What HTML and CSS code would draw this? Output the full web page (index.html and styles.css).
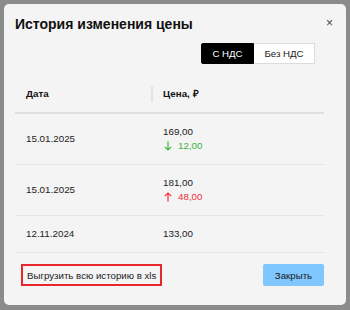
FILE: index.html
```html
<!DOCTYPE html>
<html lang="ru">
<head>
<meta charset="utf-8">
<link rel="stylesheet" href="styles.css">
</head>
<body>
<div class="overlay">
  <div class="modal">
    <div class="modal-head">
      <h1 class="title">История изменения цены</h1>
      <span class="close-x">×</span>
    </div>
    <div class="toggle-row">
      <div class="toggle">
        <span class="seg seg-active">С НДС</span>
        <span class="seg">Без НДС</span>
      </div>
    </div>
    <div class="table">
      <div class="row head">
        <div class="cell c1">Дата</div>
        <div class="cell c2">Цена, ₽</div>
      </div>
      <div class="row">
        <div class="cell c1">15.01.2025</div>
        <div class="cell c2">
          <div>169,00</div>
          <div class="delta down"><svg class="arr" width="8" height="10" viewBox="0 0 8 10"><path d="M4 0.5V9M0.8 5.8L4 9L7.2 5.8" fill="none" stroke="currentColor" stroke-width="1.2"/></svg>12,00</div>
        </div>
      </div>
      <div class="row">
        <div class="cell c1">15.01.2025</div>
        <div class="cell c2">
          <div>181,00</div>
          <div class="delta up"><svg class="arr" width="8" height="10" viewBox="0 0 8 10"><path d="M4 9.5V1M0.8 4.2L4 1L7.2 4.2" fill="none" stroke="currentColor" stroke-width="1.2"/></svg>48,00</div>
        </div>
      </div>
      <div class="row">
        <div class="cell c1">12.11.2024</div>
        <div class="cell c2">133,00</div>
      </div>
    </div>
    <div class="footer">
      <span class="export">Выгрузить всю историю в xls</span>
      <span class="btn-close">Закрыть</span>
    </div>
  </div>
</div>
</body>
</html>
```
FILE: styles.css
```css
html, body {
  margin: 0;
  padding: 0;
}
body {
  width: 350px;
  height: 310px;
  background: #8b8b8b;
  font-family: "Liberation Sans", Arial, sans-serif;
  color: #222;
  overflow: hidden;
}
.overlay {
  padding: 4px;
}
.modal {
  box-sizing: border-box;
  width: 342px;
  height: 301px;
  background: #f4f4f4;
  border-radius: 5px;
  padding: 11px 22px 0 11px;
}
.modal-head {
  display: flex;
  justify-content: space-between;
  align-items: center;
  height: 18px;
}
.title {
  margin: 0;
  font-size: 14px;
  font-weight: bold;
  line-height: 18px;
  color: #111;
}
.close-x {
  font-size: 12px;
  color: #444;
  line-height: 12px;
  margin-right: -9px;
  margin-top: -3px;
}
.toggle-row {
  display: flex;
  justify-content: flex-end;
  margin-top: 10px;
  padding-right: 9px;
}
.toggle {
  display: flex;
  height: 21px;
}
.seg {
  box-sizing: border-box;
  display: flex;
  align-items: center;
  justify-content: center;
  font-size: 9.7px;
  width: 61px;
  background: #fff;
  border: 1px solid #dcdcdc;
  border-left: none;
  color: #222;
}
.seg-active {
  width: 53px;
  background: #000;
  color: #fff;
  border: 1px solid #000;
  border-radius: 2px 0 0 2px;
}
.table {
  margin-top: 12px;
}
.row {
  display: flex;
  border-bottom: 1px solid #e4e4e4;
  font-size: 9.8px;
  line-height: 14px;
}
.row.head {
  border-bottom: 2px solid #e0e0e0;
  font-weight: bold;
  color: #111;
}
.cell {
  padding: 11px 11px;
  display: flex;
  flex-direction: column;
  justify-content: center;
}
.c1 {
  width: 137px;
  box-sizing: border-box;
}
.head .c1 {
  position: relative;
}
.head .c1::after {
  content: "";
  position: absolute;
  right: -1px;
  top: 10px;
  bottom: 10px;
  width: 2px;
  background: #e2e2e2;
}
.delta {
  display: flex;
  align-items: center;
  gap: 6px;
}
.arr {
  display: block;
  margin-left: 1px;
}
.down {
  color: #3fb33f;
}
.up {
  color: #f0303a;
}
.footer {
  display: flex;
  justify-content: space-between;
  align-items: center;
  margin-top: 11px;
}
.export {
  box-sizing: border-box;
  height: 22px;
  display: flex;
  align-items: center;
  margin-left: 6px;
  padding: 0 4px;
  border: 2px solid #e5262b;
  font-size: 9.7px;
  color: #222;
}
.btn-close {
  box-sizing: border-box;
  width: 61px;
  height: 22px;
  display: flex;
  align-items: center;
  justify-content: center;
  background: #80c6ff;
  border-radius: 2px;
  font-size: 9.7px;
  color: #1a1a1a;
}
```
